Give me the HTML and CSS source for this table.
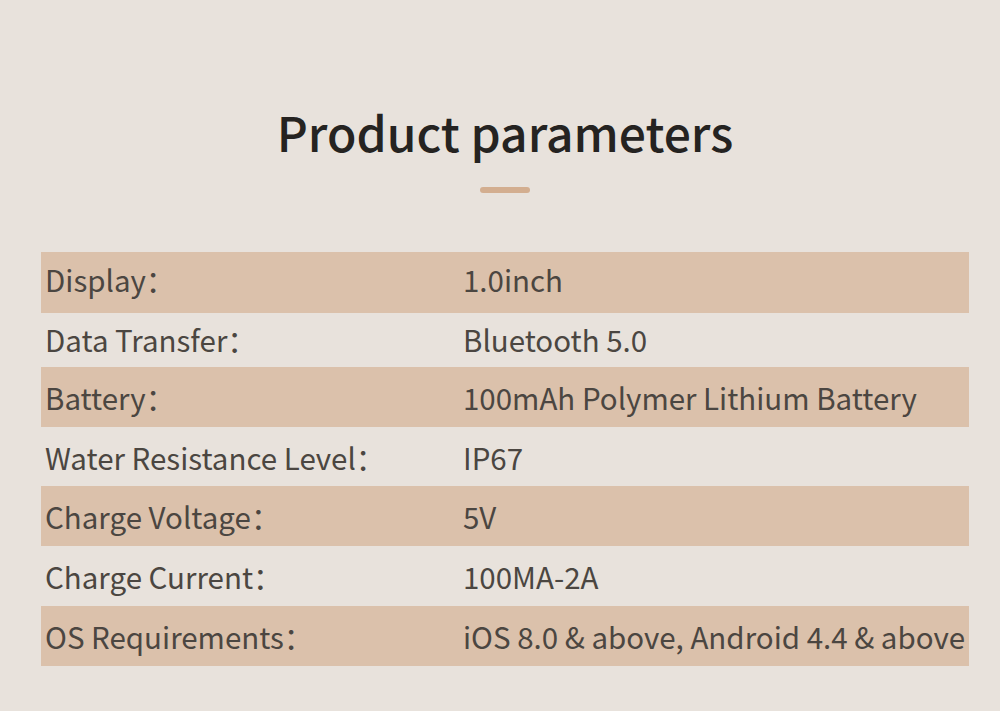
FILE: index.html
```html
<!DOCTYPE html>
<html>
<head>
<meta charset="utf-8">
<link rel="stylesheet" href="styles.css">
</head>
<body>
<div class="page">
  <div class="head">
    <h1 class="title">Product parameters</h1>
    <div class="bar"></div>
  </div>
  <div class="table">
    <div class="row shade r1"><span class="label">Display：</span><span class="value">1.0inch</span></div>
    <div class="row r2"><span class="label">Data Transfer：</span><span class="value">Bluetooth 5.0</span></div>
    <div class="row shade"><span class="label">Battery：</span><span class="value">100mAh Polymer Lithium Battery</span></div>
    <div class="row r4"><span class="label">Water Resistance Level：</span><span class="value">IP67</span></div>
    <div class="row shade"><span class="label">Charge Voltage：</span><span class="value">5V</span></div>
    <div class="row"><span class="label">Charge Current：</span><span class="value">100MA-2A</span></div>
    <div class="row shade"><span class="label">OS Requirements：</span><span class="value">iOS 8.0 &amp; above, Android 4.4 &amp; above</span></div>
  </div>
</div>
</body>
</html>
```
FILE: styles.css
```css
* { box-sizing: border-box; }
html, body { margin: 0; padding: 0; }
body {
  background: #e8e2dc;
  width: 1000px;
  height: 711px;
  overflow: hidden;
  font-family: "Noto Sans CJK SC", "Noto Sans", sans-serif;
}
.page {
  display: flex;
  flex-direction: column;
  padding-top: 98px;
}
.head {
  display: flex;
  flex-direction: column;
  align-items: center;
  padding-left: 10px;
}
.title {
  margin: 0;
  font-size: 48px;
  font-weight: 500;
  color: #252321;
  line-height: 66px;
}
.bar {
  margin-top: 23px;
  width: 50px;
  height: 6px;
  border-radius: 3px;
  background: #d3ae90;
}
.table {
  margin-top: 59px;
  margin-left: 41px;
  width: 928px;
  display: flex;
  flex-direction: column;
}
.row {
  height: 60px;
  display: flex;
  align-items: center;
  font-size: 29.5px;
  color: #4b4641;
}
.row.r1 { height: 61px; padding-bottom: 8px; }
.row.r2 { height: 54px; padding-bottom: 3px; }
.row.r4 { height: 59px; }
.shade { background: #dbc1ab; }
.label {
  width: 422px;
  padding-left: 4px;
}
.value { white-space: nowrap; }
```
